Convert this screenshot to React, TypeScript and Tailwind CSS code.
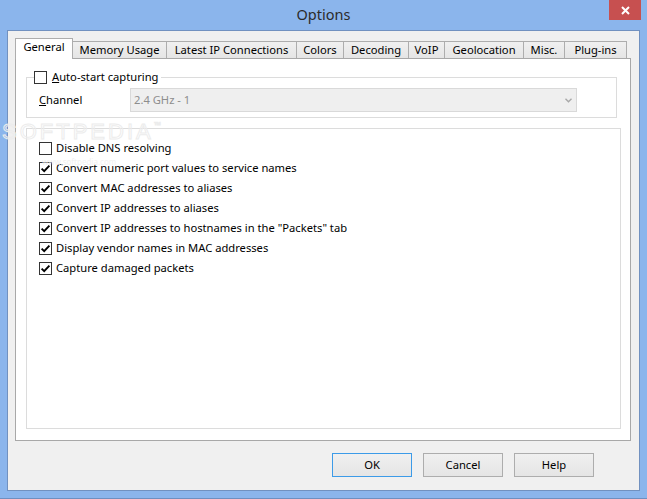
import React from "react";

const font = "font-['Noto_Sans','Open_Sans',sans-serif]";

type TabDef = { label: string; w: string; active?: boolean };

const tabs: TabDef[] = [
  { label: "General", w: "w-[58px]", active: true },
  { label: "Memory Usage", w: "w-[95px]" },
  { label: "Latest IP Connections", w: "w-[131px]" },
  { label: "Colors", w: "w-[48px]" },
  { label: "Decoding", w: "w-[66px]" },
  { label: "VoIP", w: "w-[37px]" },
  { label: "Geolocation", w: "w-[80px]" },
  { label: "Misc.", w: "w-[42px]" },
  { label: "Plug-ins", w: "w-[63px]" },
];

const options = [
  { label: "Disable DNS resolving", checked: false },
  { label: "Convert numeric port values to service names", checked: true },
  { label: "Convert MAC addresses to aliases", checked: true },
  { label: "Convert IP addresses to aliases", checked: true },
  { label: 'Convert IP addresses to hostnames in the "Packets" tab', checked: true },
  { label: "Display vendor names in MAC addresses", checked: true },
  { label: "Capture damaged packets", checked: true },
];

function CheckBox({ checked }: { checked: boolean }) {
  return (
    <span className="w-[13px] h-[13px] shrink-0 border border-[#333333] bg-white flex items-center justify-center">
      {checked && (
        <svg width="11" height="11" viewBox="0 0 11 11">
          <polyline
            points="1.6,5.6 4.2,8.2 9.4,2.6"
            fill="none"
            stroke="#000"
            strokeWidth="1.9"
          />
        </svg>
      )}
    </span>
  );
}

function Tab({ tab, first }: { tab: TabDef; first: boolean }) {
  if (tab.active) {
    return (
      <div
        className={`${tab.w} h-[21px] -mb-px relative z-10 bg-white border border-b-0 border-[#adadad] flex items-center justify-center pb-[3px] text-[11.2px] text-black`}
      >
        {tab.label}
      </div>
    );
  }
  return (
    <div
      className={`${tab.w} h-[17px] ${first ? "" : "-ml-px"} bg-gradient-to-b from-[#f0f0f0] to-[#e5e5e5] border border-b-0 border-[#adadad] flex items-center justify-center text-[11.2px] text-black`}
    >
      {tab.label}
    </div>
  );
}

function Button({ label, def }: { label: string; def?: boolean }) {
  return (
    <button
      className={`w-[80px] h-[24px] border ${def ? "border-[#3c9be8]" : "border-[#adadad]"} bg-gradient-to-b from-[#f0f0f0] to-[#e5e5e5] text-[11.2px] text-black flex items-center justify-center`}
    >
      {label}
    </button>
  );
}

export default function App() {
  return (
    <div className={`${font} relative w-[647px] h-[499px] bg-[#8bb5ec] border-b border-[#6f8fc0] flex flex-col overflow-hidden`}>
      {/* title bar */}
      <div className="h-[30px] shrink-0 relative flex items-center justify-center">
        <span className="text-[14.5px] text-[#2b2b2b] pb-[1px]">Options</span>
        <div className="absolute top-0 right-[6px] w-[32px] h-[20px] bg-[#c75050] flex items-center justify-center">
          <svg width="9" height="9" viewBox="0 0 9 9">
            <path d="M1 1 L8 8 M8 1 L1 8" stroke="#fff" strokeWidth="2" />
          </svg>
        </div>
      </div>

      {/* client area */}
      <div className="mx-[7px] h-[461px] shrink-0 border border-[#7191c0] bg-[#f0f0f0] flex flex-col">
        <div className="pt-[7px] px-[7px]">
          <div className="flex items-end h-[20px]">
            {tabs.map((t, i) => (
              <Tab key={t.label} tab={t} first={i === 0} />
            ))}
          </div>

          <div className="w-[616px] h-[383px] bg-white border border-[#a8a8a8] pl-[10px] pt-[10px] flex flex-col">
            <fieldset className="w-[591px] border border-[#dcdcdc] pl-[12px] pt-[3px] pb-[5px] m-0">
              <legend className="-ml-[5px] pr-[2px] h-[16px] flex items-center gap-[5px] text-[11.2px] text-black">
                <CheckBox checked={false} />
                <span>
                  <span className="underline">A</span>uto-start capturing
                </span>
              </legend>
              <div className="flex items-center h-[24px]">
                <span className="w-[91px] text-[11.2px] text-black">
                  <span className="underline">C</span>hannel
                </span>
                <div className="w-[447px] h-[24px] bg-[#efefef] border border-[#d9d9d9] flex items-center justify-between pl-[3px] pr-[4px]">
                  <span className="text-[11.2px] text-[#8d8d8d]">2.4 GHz - 1</span>
                  <svg width="7" height="5" viewBox="0 0 7 5">
                    <path d="M0.5 0.8 L3.5 3.8 L6.5 0.8" fill="none" stroke="#a8a8a8" strokeWidth="1.4" />
                  </svg>
                </div>
              </div>
            </fieldset>

            <div className="mt-[10px] w-[595px] h-[301px] border border-[#dcdcdc] pl-[12px] pt-[9px] flex flex-col">
              {options.map((o) => (
                <div key={o.label} className="h-[20px] flex items-center gap-[4px] text-[11.2px] text-black">
                  <CheckBox checked={o.checked} />
                  <span>{o.label}</span>
                </div>
              ))}
            </div>
          </div>
        </div>

        <div className="flex justify-end gap-[11px] pr-[45px] pt-[12px]">
          <Button label="OK" def />
          <Button label="Cancel" />
          <Button label="Help" />
        </div>
      </div>

      {/* watermark */}
      <div className="absolute left-[2px] top-[121px] pointer-events-none">
        <div className="text-[22px] leading-none tracking-[3px] text-transparent [-webkit-text-stroke:1px_#ececec] font-['Liberation_Sans',sans-serif]">
          SOFTPEDIA<span className="text-[7px] align-top">™</span>
        </div>
        <div className="ml-[40px] mt-[15px] text-[8px] leading-none text-[#f0f0f0]">www.softpedia.com</div>
      </div>
    </div>
  );
}
